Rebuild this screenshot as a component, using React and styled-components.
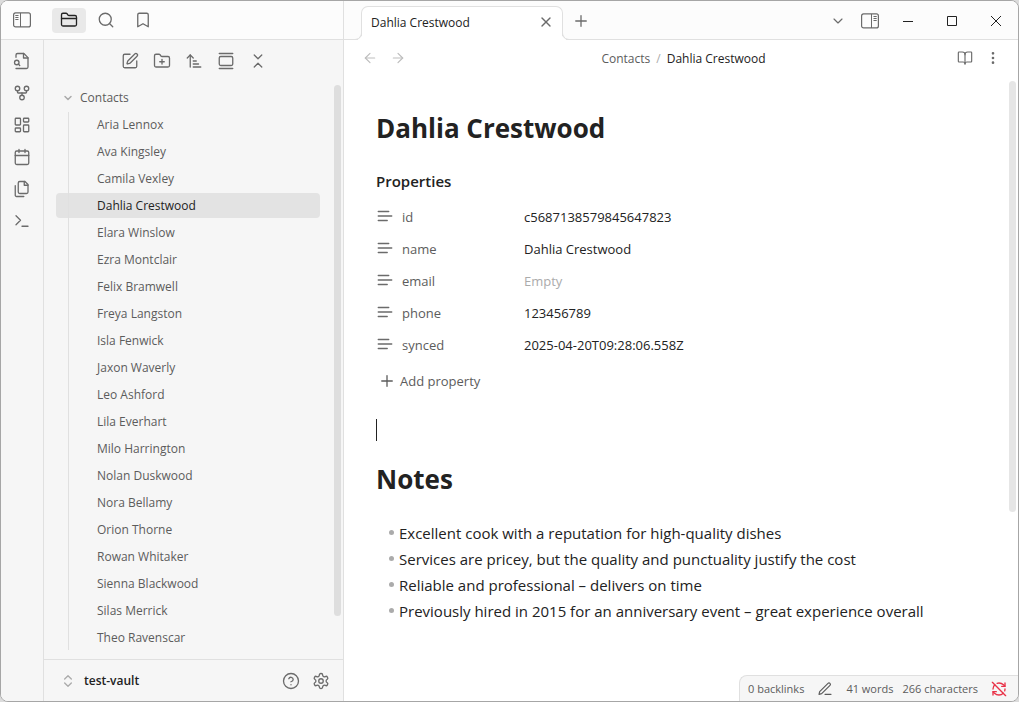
import React from "react";
import styled, { createGlobalStyle } from "styled-components";
import {
  FolderClosed, Search, Bookmark, GitFork, LayoutDashboard, SquarePen, FolderPlus,
  ArrowUpNarrowWide, GalleryVertical, ChevronsDownUp, ChevronsUpDown, ChevronDown, X, Plus,
  ArrowLeft, ArrowRight, BookOpen, EllipsisVertical, CircleQuestionMark, RefreshCwOff,
} from "lucide-react";

const c = {
  text: "#222222",
  muted: "#5c5c5c",
  icon: "#6b6b6b",
  faint: "#ababab",
  line: "#e0e0e0",
  side: "#f6f6f6",
  bar: "#fcfcfc",
  active: "#e3e3e3",
  frame: "#a6a6a6",
};

const GlobalStyle = createGlobalStyle`
  *, *::before, *::after { box-sizing: border-box; }
  body {
    margin: 0;
    background: #dcdcdc;
    color: ${c.text};
    font-family: "Open Sans", "Noto Sans", sans-serif;
    font-size: 12px;
  }
  button, input { font: inherit; color: inherit; }
  button { background: none; border: 0; padding: 0; cursor: pointer; }
  a { color: inherit; text-decoration: none; }
  svg { flex: none; display: block; }
`;

const Window = styled.div`
  display: grid;
  grid-template-columns: 343px minmax(0, 1fr);
  min-height: 100vh;
  border: 1px solid ${c.frame};
  border-radius: 8px;
  overflow: hidden;
  background: #ffffff;
`;

const LeftDock = styled.div`
  display: flex;
  flex-direction: column;
  background: ${c.side};
  border-right: 1px solid ${c.line};
`;

const DockHeader = styled.div`
  display: flex;
  align-items: center;
  gap: 13px;
  height: 39px;
  padding: 0 4px;
  background: ${c.bar};
  border-bottom: 1px solid ${c.line};
`;

const DockTabs = styled.div`
  display: flex;
  gap: 3px;
`;

const IconButton = styled.button`
  display: flex;
  align-items: center;
  justify-content: center;
  width: ${(p) => p.$width || 32}px;
  height: ${(p) => p.$height || 26}px;
  border-radius: 4px;
  color: ${(p) => p.$color || c.icon};
  background: ${(p) => (p.$active ? "#e9e9e9" : "transparent")};
`;

const DockBody = styled.div`
  display: flex;
  flex: 1;
`;

const Ribbon = styled.nav`
  display: flex;
  flex-direction: column;
  align-items: center;
  gap: 6px;
  width: 43px;
  padding-top: 8px;
  border-right: 1px solid ${c.line};
`;

const Explorer = styled.section`
  display: flex;
  flex-direction: column;
  flex: 1;
  min-width: 0;
`;

const ExplorerTools = styled.div`
  display: flex;
  justify-content: center;
  padding-top: 8px;
  height: 44px;
`;

const ExplorerScroll = styled.div`
  display: flex;
  flex: 1;
`;

const Tree = styled.div`
  flex: 1;
  padding: 0 14px 0 12px;
`;

const FolderRow = styled.button`
  display: flex;
  align-items: center;
  gap: 6px;
  width: 100%;
  height: 27px;
  padding-left: 6px;
  color: ${c.muted};
  svg { color: ${c.faint}; }
`;

const FileList = styled.ul`
  position: relative;
  margin: 0;
  padding: 0;
  list-style: none;
  &::before {
    content: "";
    position: absolute;
    z-index: 1;
    left: 12px;
    top: 1px;
    bottom: 1px;
    width: 1px;
    background: ${c.line};
  }
`;

const FileItem = styled.li`
  display: flow-root;
  height: 27px;
`;

const FileLink = styled.a`
  display: block;
  height: 25px;
  margin: 1px 0;
  padding-left: 41px;
  line-height: 25px;
  border-radius: 4px;
  color: ${(p) => (p.$active ? c.text : c.muted)};
  background: ${(p) => (p.$active ? c.active : "transparent")};
`;

const Rail = styled.div`
  display: flex;
  flex-direction: column;
  flex: none;
  width: 9px;
  padding-top: ${(p) => p.$top}px;
`;

const Thumb = styled.div`
  flex: 0 1 ${(p) => p.$share};
  width: 7px;
  border-radius: 4px;
  background: ${(p) => p.$color};
`;

const VaultBar = styled.footer`
  display: flex;
  align-items: center;
  height: 42px;
  padding: 0 7px 0 16px;
  border-top: 1px solid ${c.line};
`;

const VaultSwitch = styled.button`
  display: flex;
  align-items: center;
  gap: 8px;
  margin-right: auto;
  font-weight: 600;
  svg { color: ${c.faint}; }
`;

const Workspace = styled.div`
  position: relative;
  display: flex;
  flex-direction: column;
  min-width: 0;
`;

const TabBar = styled.div`
  display: flex;
  align-items: flex-end;
  height: 39px;
  padding-left: 17px;
  background: ${c.bar};
  box-shadow: inset 0 -1px 0 ${c.line};
`;

const Tab = styled.div`
  position: relative;
  display: flex;
  align-items: center;
  justify-content: space-between;
  width: 202px;
  height: 34px;
  padding: 0 7px 3px 9px;
  background: #ffffff;
  border: 1px solid ${c.line};
  border-bottom: 0;
  border-radius: 7px 7px 0 0;
  &::before, &::after {
    content: "";
    position: absolute;
    bottom: 0;
    width: 7px;
    height: 7px;
    border: 0 solid ${c.line};
    border-bottom-width: 1px;
  }
  &::before {
    left: -7px;
    border-right-width: 1px;
    border-bottom-right-radius: 7px;
    box-shadow: 3px 3px 0 #ffffff;
  }
  &::after {
    right: -7px;
    border-left-width: 1px;
    border-bottom-left-radius: 7px;
    box-shadow: -3px 3px 0 #ffffff;
  }
`;

const BarGroup = styled.div`
  display: flex;
  align-items: center;
  align-self: stretch;
  margin-left: ${(p) => (p.$end ? "auto" : "2px")};
`;

const ViewHeader = styled.header`
  display: flex;
  align-items: center;
  height: 36px;
  padding: 0 11px 0 12px;
`;

const Crumbs = styled.nav`
  display: flex;
  flex: 1;
  justify-content: center;
  gap: 6px;
  padding-left: 4px;
  color: ${c.muted};
  span { color: ${c.faint}; }
  a[aria-current] { color: ${c.text}; }
`;

const Editor = styled.main`
  display: flex;
  flex: 1;
`;

const Note = styled.article`
  flex: 1;
  min-width: 0;
  padding: 32px 32px 60px;
`;

const Title = styled.h1`
  margin: 0;
  font-size: 26px;
  line-height: 40px;
  font-weight: 700;
`;

const Properties = styled.section`
  margin-top: 21px;
  font-size: 13px;
`;

const PropertiesTitle = styled.h2`
  margin: 0 0 8px;
  font-size: 15px;
  line-height: 24px;
  font-weight: 600;
`;

const Property = styled.div`
  display: flex;
  align-items: center;
  height: 32px;
`;

const PropertyLabel = styled.label`
  display: flex;
  align-items: center;
  gap: 8px;
  width: 148px;
  color: ${c.muted};
  svg { margin-bottom: 2px; color: ${c.icon}; }
`;

const PropertyInput = styled.input`
  flex: 1;
  min-width: 0;
  padding: 0;
  border: 0;
  outline: 0;
  background: none;
  &::placeholder { color: ${c.faint}; opacity: 1; }
`;

const AddProperty = styled.button`
  display: flex;
  align-items: center;
  gap: 4px;
  height: 24px;
  margin-top: 8px;
  padding-left: 2px;
  color: ${c.muted};
`;

const CaretLine = styled.div`
  height: 24px;
  margin: 26px 0 16px;
  &::before {
    content: "";
    display: block;
    width: 1px;
    height: 22px;
    background: ${c.text};
  }
`;

const Bullets = styled.ul`
  margin: 21px 0 0;
  padding: 0 0 0 13px;
  list-style: none;
  font-size: 15px;
  line-height: 26px;
`;

const Bullet = styled.li`
  display: flex;
  gap: 5px;
  &::before {
    content: "";
    flex: none;
    width: 5px;
    height: 5px;
    margin-top: 10px;
    border-radius: 50%;
    background: ${c.faint};
  }
`;

const StatusBar = styled.footer`
  position: absolute;
  right: 0;
  bottom: 0;
  display: flex;
  align-items: center;
  gap: 9px;
  height: 26px;
  padding: 0 7px 0 8px;
  background: ${c.side};
  border: 1px solid ${c.line};
  border-width: 1px 0 0 1px;
  border-radius: 8px 0 0 0;
  color: ${c.muted};
  font-size: 11px;
`;

const StatusIcon = styled.span`
  display: flex;
  padding: 0 4px;
`;

const Glyph = ({ size = 18, children }) => (
  <svg width={size} height={size} viewBox="0 0 24 24" fill="none" stroke="currentColor"
    strokeWidth="1.75" strokeLinecap="round" strokeLinejoin="round">
    {children}
  </svg>
);

const SidebarIcon = ({ right }) => (
  <svg width="18" height="16" viewBox="0 0 18 16" fill="none" stroke="currentColor">
    <rect x=".6" y=".9" width="16.8" height="14" rx="2" strokeWidth="1.2" />
    {right ? (
      <path d="M10.5 1v14M12.5 3.5h3.2M12.5 5.5h3.2M12.5 7.5h3.2" />
    ) : (
      <path d="M7.5 1v14M2.3 3.5h3.2M2.3 5.5h3.2M2.3 7.5h3.2" />
    )}
  </svg>
);

const FileSearchIcon = () => (
  <Glyph>
    <path d="M4 22h14a2 2 0 0 0 2-2V7.5L14.5 2H6a2 2 0 0 0-2 2v3" />
    <path d="M14 2v6h6" />
    <circle cx="5" cy="14" r="3" />
    <path d="m9 18-1.9-1.9" />
  </Glyph>
);

const CalendarIcon = () => (
  <Glyph>
    <rect x="3" y="4" width="18" height="18" rx="2" />
    <path d="M16 2v4M8 2v4M3 10h18" />
  </Glyph>
);

const FilesIcon = () => (
  <Glyph>
    <path d="M15 2v5h5" />
    <path d="M9 18a2 2 0 0 1-2-2V4a2 2 0 0 1 2-2h7l4 4v10a2 2 0 0 1-2 2Z" />
    <path d="M3 7.6v12.8c0 .4.2.8.5 1.1s.7.5 1.1.5h9.8" />
  </Glyph>
);

const TerminalIcon = () => (
  <Glyph>
    <path d="m4 17 6-6-6-6M12 19h8" />
  </Glyph>
);

const GearIcon = () => (
  <Glyph>
    <path d="M12.22 2h-.44a2 2 0 0 0-2 2v.18a2 2 0 0 1-1 1.73l-.43.25a2 2 0 0 1-2 0l-.15-.08a2 2 0 0 0-2.73.73l-.22.38a2 2 0 0 0 .73 2.73l.15.1a2 2 0 0 1 1 1.72v.51a2 2 0 0 1-1 1.74l-.15.09a2 2 0 0 0-.73 2.73l.22.38a2 2 0 0 0 2.73.73l.15-.08a2 2 0 0 1 2 0l.43.25a2 2 0 0 1 1 1.73V20a2 2 0 0 0 2 2h.44a2 2 0 0 0 2-2v-.18a2 2 0 0 1 1-1.73l.43-.25a2 2 0 0 1 2 0l.15.08a2 2 0 0 0 2.73-.73l.22-.39a2 2 0 0 0-.73-2.73l-.15-.08a2 2 0 0 1-1-1.74v-.5a2 2 0 0 1 1-1.74l.15-.09a2 2 0 0 0 .73-2.73l-.22-.38a2 2 0 0 0-2.73-.73l-.15.08a2 2 0 0 1-2 0l-.43-.25a2 2 0 0 1-1-1.73V4a2 2 0 0 0-2-2z" />
    <circle cx="12" cy="12" r="3" />
  </Glyph>
);

const TextIcon = () => (
  <Glyph>
    <path d="M17 6H3M21 12H3M15 18H3" />
  </Glyph>
);

const PenIcon = () => (
  <Glyph size={16}>
    <path d="M12 20h9" />
    <path d="M16.5 3.5a2.12 2.12 0 0 1 3 3L7 19l-4 1 1-4Z" />
  </Glyph>
);

const WindowGlyph = ({ d }) => (
  <svg width="12" height="12" viewBox="0 0 12 12" fill="none" stroke="currentColor">
    <path d={d} />
  </svg>
);

const icon = { size: 18, strokeWidth: 1.75 };

const contacts = [
  "Aria Lennox", "Ava Kingsley", "Camila Vexley", "Dahlia Crestwood", "Elara Winslow",
  "Ezra Montclair", "Felix Bramwell", "Freya Langston", "Isla Fenwick", "Jaxon Waverly",
  "Leo Ashford", "Lila Everhart", "Milo Harrington", "Nolan Duskwood", "Nora Bellamy",
  "Orion Thorne", "Rowan Whitaker", "Sienna Blackwood", "Silas Merrick", "Theo Ravenscar",
];

const properties = [
  ["id", "c5687138579845647823"],
  ["name", "Dahlia Crestwood"],
  ["email", ""],
  ["phone", "123456789"],
  ["synced", "2025-04-20T09:28:06.558Z"],
];

const notes = [
  "Excellent cook with a reputation for high-quality dishes",
  "Services are pricey, but the quality and punctuality justify the cost",
  "Reliable and professional – delivers on time",
  "Previously hired in 2015 for an anniversary event – great experience overall",
];

export default function App() {
  const current = "Dahlia Crestwood";
  return (
    <>
      <GlobalStyle />
      <Window>
        <LeftDock>
          <DockHeader>
            <IconButton $width={34} $height={25} aria-label="Toggle left sidebar"><SidebarIcon /></IconButton>
            <DockTabs>
              <IconButton $width={34} $height={25} aria-label="Files" $active $color={c.text}><FolderClosed {...icon} /></IconButton>
              <IconButton $width={34} $height={25} aria-label="Search"><Search {...icon} /></IconButton>
              <IconButton $width={34} $height={25} aria-label="Bookmarks"><Bookmark {...icon} /></IconButton>
            </DockTabs>
          </DockHeader>
          <DockBody>
            <Ribbon>
              <IconButton aria-label="Open quick switcher"><FileSearchIcon /></IconButton>
              <IconButton aria-label="Open graph view"><GitFork {...icon} /></IconButton>
              <IconButton aria-label="Create new canvas"><LayoutDashboard {...icon} /></IconButton>
              <IconButton aria-label="Open daily note"><CalendarIcon /></IconButton>
              <IconButton aria-label="Insert template"><FilesIcon /></IconButton>
              <IconButton aria-label="Open command palette"><TerminalIcon /></IconButton>
            </Ribbon>
            <Explorer>
              <ExplorerTools>
                <IconButton aria-label="New note"><SquarePen {...icon} /></IconButton>
                <IconButton aria-label="New folder"><FolderPlus {...icon} /></IconButton>
                <IconButton aria-label="Change sort order"><ArrowUpNarrowWide {...icon} /></IconButton>
                <IconButton aria-label="Auto-reveal current file"><GalleryVertical {...icon} /></IconButton>
                <IconButton aria-label="Collapse all"><ChevronsDownUp {...icon} /></IconButton>
              </ExplorerTools>
              <ExplorerScroll>
                <Tree>
                  <FolderRow aria-expanded="true"><ChevronDown size={12} strokeWidth={3} />Contacts</FolderRow>
                  <FileList>
                    {contacts.map((name) => (
                      <FileItem key={name}>
                        <FileLink href="#" $active={name === current}>{name}</FileLink>
                      </FileItem>
                    ))}
                  </FileList>
                </Tree>
                <Rail $top={1}><Thumb $share="92.5%" $color="#dedede" /></Rail>
              </ExplorerScroll>
              <VaultBar>
                <VaultSwitch><ChevronsUpDown size={16} strokeWidth={2} />test-vault</VaultSwitch>
                <IconButton $width={30} aria-label="Help"><CircleQuestionMark {...icon} /></IconButton>
                <IconButton $width={30} aria-label="Settings"><GearIcon /></IconButton>
              </VaultBar>
            </Explorer>
          </DockBody>
        </LeftDock>
        <Workspace>
          <TabBar>
            <Tab>
              {current}
              <IconButton $width={18} $height={18} aria-label="Close tab"><X size={16} strokeWidth={2} /></IconButton>
            </Tab>
            <BarGroup>
              <IconButton aria-label="New tab"><Plus {...icon} /></IconButton>
            </BarGroup>
            <BarGroup $end>
              <IconButton aria-label="Tab list"><ChevronDown size={16} strokeWidth={1.75} /></IconButton>
              <IconButton aria-label="Toggle right sidebar"><SidebarIcon right /></IconButton>
              <IconButton $width={44} $color={c.text} aria-label="Minimize"><WindowGlyph d="M1 6.5h10" /></IconButton>
              <IconButton $width={44} $color={c.text} aria-label="Maximize"><WindowGlyph d="M1.5 1.5h9v9h-9z" /></IconButton>
              <IconButton $width={44} $color={c.text} aria-label="Close"><WindowGlyph d="M1 1l10 10M11 1L1 11" /></IconButton>
            </BarGroup>
          </TabBar>
          <ViewHeader>
            <IconButton $width={28} $color="#bdbdbd" aria-label="Back"><ArrowLeft size={16} strokeWidth={1.75} /></IconButton>
            <IconButton $width={28} $color="#bdbdbd" aria-label="Forward"><ArrowRight size={16} strokeWidth={1.75} /></IconButton>
            <Crumbs>
              <a href="#">Contacts</a><span>/</span><a href="#" aria-current="page">{current}</a>
            </Crumbs>
            <IconButton $width={28} aria-label="Reading view"><BookOpen size={16} strokeWidth={1.75} /></IconButton>
            <IconButton $width={28} aria-label="More options"><EllipsisVertical size={16} strokeWidth={2} /></IconButton>
          </ViewHeader>
          <Editor>
            <Note>
              <Title>{current}</Title>
              <Properties>
                <PropertiesTitle>Properties</PropertiesTitle>
                {properties.map(([key, value]) => (
                  <Property key={key}>
                    <PropertyLabel htmlFor={`property-${key}`}><TextIcon />{key}</PropertyLabel>
                    <PropertyInput id={`property-${key}`} defaultValue={value} placeholder="Empty" />
                  </Property>
                ))}
                <AddProperty><Plus {...icon} />Add property</AddProperty>
              </Properties>
              <CaretLine />
              <Title as="h2">Notes</Title>
              <Bullets>
                {notes.map((note) => <Bullet key={note}>{note}</Bullet>)}
              </Bullets>
            </Note>
            <Rail $top={5}><Thumb $share="69.5%" $color="#e6e6e6" /></Rail>
          </Editor>
          <StatusBar>
            <span>0 backlinks</span>
            <StatusIcon><PenIcon /></StatusIcon>
            <span>41 words</span>
            <span>266 characters</span>
            <StatusIcon><RefreshCwOff size={16} strokeWidth={2} color="#e93147" /></StatusIcon>
          </StatusBar>
        </Workspace>
      </Window>
    </>
  );
}
